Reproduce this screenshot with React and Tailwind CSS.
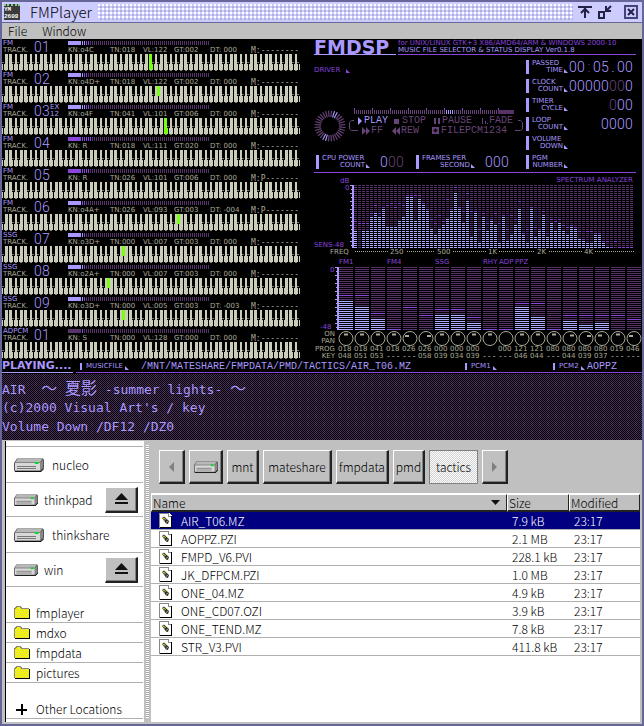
import React from "react";

const UI = "font-['Noto_Sans_CJK_JP',sans-serif] font-light";
const MONO = "font-['Liberation_Mono',monospace]";
const DASH = "font-['DejaVu_Sans_Mono',monospace] text-[8px] leading-[7px]";
const TINY = "font-['DejaVu_Sans',sans-serif] text-[7px] leading-[7px]";
const TERM = "font-['DejaVu_Sans_Mono','Noto_Sans_CJK_JP',monospace]";

const range = (n) => Array.from({ length: n }, (_, i) => i);

const TRACKS = [
  { kind: "FM", n: "01", on: "#aa99ff", bars: 2, mids: 2, kn: "o4C", tn: "018", vl: "122", gt: "002", dt: " 000", m: "--------", key: [147, false] },
  { kind: "FM", n: "02", on: "#aa99ff", bars: 1, mids: 2, kn: "o4D+", tn: "018", vl: "122", gt: "002", dt: " 000", m: "--------", key: [155, true] },
  { kind: "FM", n: "03", ex: true, on: "#aa99ff", bars: 2, mids: 2, kn: "o4F", tn: "041", vl: "101", gt: "006", dt: " 000", m: "--------", key: [162, false] },
  { kind: "FM", n: "04", on: "#8844dd", bars: 0, mids: 5, kn: " R", tn: "018", vl: "111", gt: "020", dt: " 000", m: "--------" },
  { kind: "FM", n: "05", on: "#8844dd", bars: 0, mids: 4, kn: " R", tn: "026", vl: "101", gt: "006", dt: " 000", m: "P-------" },
  { kind: "FM", n: "06", on: "#aa99ff", bars: 0, mids: 2, kn: "o4A+", tn: "026", vl: "093", gt: "003", dt: "-004", m: "P-------", key: [175, true] },
  { kind: "SSG", n: "07", on: "#aa99ff", bars: 1, mids: 1, kn: "o3D+", tn: "000", vl: "007", gt: "003", dt: " 000", m: "--------", key: [120, true] },
  { kind: "SSG", n: "08", on: "#aa99ff", bars: 1, mids: 1, kn: "o2A+", tn: "000", vl: "007", gt: "003", dt: " 000", m: "--------", key: [105, true] },
  { kind: "SSG", n: "09", on: "#aa99ff", bars: 1, mids: 1, kn: "o3D+", tn: "000", vl: "005", gt: "003", dt: "-003", m: "--------", key: [120, true] },
  { kind: "ADPCM", n: "01", on: "#553366", bars: 0, mids: 1, kn: " S", tn: "000", vl: "128", gt: "000", dt: " 000", m: "--------" },
];

const SPECTRUM = [
  [9, 14], [0, 13], [9, 13], [9, 13], [16, 18], [18, 22], [16, 18], [20, 21], [11, 22], [11, 23],
  [11, 21], [14, 23], [16, 22], [26, 27], [26, 27], [14, 27], [25, 27], [22, 23], [19, 20], [10, 15],
  [7, 13], [10, 17], [12, 14], [15, 25], [19, 20], [28, 31], [20, 21], [13, 19], [24, 28], [6, 19],
  [18, 19], [3, 10], [16, 18], [9, 13], [14, 15], [12, 18], [3, 13], [16, 17], [4, 10], [7, 17],
  [12, 15], [20, 24], [7, 8], [3, 10], [20, 21], [6, 11], [9, 10], [17, 19], [6, 8], [13, 15],
  [9, 14], [13, 15], [9, 12], [7, 11], [11, 12], [10, 11], [5, 9], [4, 5], [3, 9], [3, 9],
  [7, 8], [7, 8], [3, 4], [1, 4], [0, 1], [0, 4], [0, 1], [0, 1], [0, 1], [0, 1],
];

const LEVELS = [
  [15, 18], [12, 18], [6, 9], [0, 1], [0, 12], [0, 8], [8, 11], [8, 11], [4, 7], [0, 1],
  [0, 1], [12, 14], [7, 14], [0, 1], [5, 8], [3, 8], [4, 8], [0, 8], [0, 6],
];
const PAN = [0, 0, 0, 0, -3, 3, 0, 0, 0, 0, null, 0, 0, 0, 2, 3, -2, 0, -3];

const PROG = ["018", "018", "041", "018", "026", "026", "000", "000", "000", "", "000", "121", "121", "080", "080", "080", "080", "019", "046"];
const KEYS = ["048", "051", "053", "---", "---", "058", "039", "034", "039", "---", "---", "046", "044", "---", "044", "039", "037", "---", "---"];

const FILES = [
  ["AIR_T06.MZ", "7.9 kB"], ["AOPPZ.PZI", "2.1 MB"], ["FMPD_V6.PVI", "228.1 kB"], ["JK_DFPCM.PZI", "1.0 MB"],
  ["ONE_04.MZ", "4.9 kB"], ["ONE_CD07.OZI", "3.9 kB"], ["ONE_TEND.MZ", "7.8 kB"], ["STR_V3.PVI", "411.8 kB"],
];

function Digits({ value, dim = [], className = "" }) {
  return (
    <span className={"flex h-[14px] font-['Roboto',sans-serif] text-[14px] leading-[14px] font-light text-[#aa99ff] " + className}>
      {value.split("").map((c, i) => (
        <span key={i} className={"w-2 text-center " + (dim.includes(i) ? "text-[#664477]" : "")}>{c}</span>
      ))}
    </span>
  );
}

function Corner({ className = "" }) {
  return (
    <svg width="4" height="4" viewBox="0 0 4 4" className={"inline-block " + className} aria-hidden="true">
      <path d="M0 0L4 4H0z" fill="currentColor" />
    </svg>
  );
}

/* ---------- title bar and menus ---------- */

function ChipIcon() {
  return (
    <div className={"ml-0.5 h-4 w-4 border-t-2 border-dotted border-[#88cc88] bg-[#3a3a3a] text-[6px] leading-[7px] font-bold text-white " + MONO}>
      <div>YM</div>
      <div>2608</div>
    </div>
  );
}

function TitleBar() {
  return (
    <header className="flex h-5 items-center bg-[#ccccff]">
      <ChipIcon />
      <h1 className={"ml-[10px] w-[66px] text-[15px] leading-5 text-black " + UI}>FMPlayer</h1>
      <div className="ml-0.5 h-4 flex-1 bg-[radial-gradient(circle_at_1px_1px,#ffffff_1px,transparent_1px),radial-gradient(circle_at_3px_3px,#b0b0dd_1px,transparent_1px)] bg-[length:4px_4px]" />
      <button aria-label="Roll up" className="ml-1 flex h-4 w-4 items-center justify-center">
        <svg width="14" height="12" viewBox="0 0 14 12" fill="none" stroke="#222244" strokeWidth="2" shapeRendering="crispEdges">
          <path d="M0 1H14M7 2V12" /><path d="M3 7L7 3L11 7" shapeRendering="auto" />
        </svg>
      </button>
      <button aria-label="Minimize" className="ml-1 flex h-4 w-4 items-center justify-center">
        <svg width="14" height="14" viewBox="0 0 14 14" fill="none" stroke="#222244">
          <path d="M1 7H6V13H1z" strokeWidth="2" /><path d="M13 1L9 5M8 1V6H13" strokeWidth="2" />
        </svg>
      </button>
      <button aria-label="Close" className="mr-1 ml-[11px] flex h-[14px] w-[14px] items-center justify-center border-2 border-[#444477]">
        <svg width="10" height="10" viewBox="0 0 10 10" stroke="#222244" strokeWidth="2">
          <path d="M2 2L8 8M8 2L2 8" />
        </svg>
      </button>
    </header>
  );
}

function MenuBar() {
  return (
    <nav className={"flex h-[17px] gap-[15px] border-t border-t-[#666699] bg-[#c0c0c0] pl-1.5 text-[12px] leading-4 text-black " + UI}>
      <button>File</button>
      <button>Window</button>
    </nav>
  );
}

/* ---------- track list ---------- */

function Keyboard({ lit }) {
  const blacks = [3, 8, 18, 23, 28];
  const octaves = range(10).map((o) => o * 35 - 28);
  return (
    <svg width="298" height="18" viewBox="0 0 298 18" shapeRendering="crispEdges" className="block" aria-hidden="true">
      {octaves.map((x) => range(7).map((k) => (
        <g key={x + "-" + k}>
          <rect x={x + k * 5} y="0" width="4" height="16" fill="#ccccbb" />
          <rect x={x + k * 5 + 1} y="16" width="2" height="1" fill="#888877" />
        </g>
      )))}
      {lit && !lit[1] && <rect x={lit[0]} y="0" width="4" height="16" fill="#77ff11" />}
      {octaves.map((x) => blacks.map((b) => (
        <g key={x + "-" + b}>
          <rect x={x + b} y="0" width="3" height="10" fill="#000000" />
          <rect x={x + b} y="8" width="2" height="1" fill="#777766" />
        </g>
      )))}
      {lit && lit[1] && <rect x={lit[0]} y="0" width="3" height="10" fill="#77ff11" />}
    </svg>
  );
}

function Meter({ t }) {
  return (
    <svg width="142" height="5" viewBox="0 0 142 5" shapeRendering="crispEdges" className="mt-px block" aria-hidden="true">
      <rect x="0" y="0" width="13" height="4" fill={t.on} />
      {range(64).map((i) => (
        <rect key={i} x={14 + i * 2} y="0" width="1" height="4"
          fill={i < t.bars ? "#aa99ff" : i < t.bars + t.mids ? "#8844dd" : "#553366"} />
      ))}
    </svg>
  );
}

function Track({ t }) {
  return (
    <li className="h-8">
      <div className={"flex h-[14px] text-[#aaaa99] whitespace-pre " + TINY}>
        <div className="w-8 pl-px">
          <div className="text-[#aa99ff]">{t.kind}</div>
          <div>TRACK.</div>
        </div>
        <Digits value={t.n} />
        <div className="w-[18px] text-[#aa99ff]">
          {t.ex && <><div>EX</div><div>12</div></>}
        </div>
        <div>
          <Meter t={t} />
          <div className="flex pt-px">
            <span className="w-[42px]">KN:{t.kn}</span>
            <span className="w-[33px]">TN:{t.tn}</span>
            <span className="w-[31px]">VL:{t.vl}</span>
            <span className="w-9">GT:{t.gt}</span>
            <span className="w-[41px]">DT: {t.dt.trim()}</span>
            <span className={DASH}>M:{t.m}</span>
          </div>
        </div>
      </div>
      <Keyboard lit={t.key} />
    </li>
  );
}

/* ---------- status side ---------- */

function Stat({ a, b, children }) {
  return (
    <div className="flex h-[14px] text-[#aa99ff]">
      <div className="mr-[3px] w-[3px] bg-[#aa99ff]" />
      <div className={"flex-1 whitespace-nowrap " + TINY}>
        <div>{a}</div>
        <div className="flex items-center justify-end gap-px">{b}<Corner /></div>
      </div>
      {children}
    </div>
  );
}

function Dial() {
  return (
    <svg width="32" height="32" viewBox="-16 -16 32 32" aria-hidden="true">
      {range(32).map((i) => {
        const a = ((i + 0.5) * Math.PI) / 16;
        const lit = i === 25 || i === 26 || i === 9 || i === 10;
        return (
          <line key={i} x1={Math.cos(a) * 9} y1={Math.sin(a) * 9} x2={Math.cos(a) * 15.5} y2={Math.sin(a) * 15.5}
            stroke={lit ? "#aa99ff" : "#664477"} strokeWidth="1.2" />
        );
      })}
    </svg>
  );
}

function Progress() {
  return (
    <svg width="161" height="8" viewBox="0 0 161 8" shapeRendering="crispEdges" className="block" aria-hidden="true">
      {range(72).map((i) => (
        <rect key={i} x={i * 2} y="2" width="1" height="4" fill={i >= 46 && i < 50 ? "#aa99ff" : "#664477"} />
      ))}
      {range(9).map((i) => <rect key={i} x={i * 18} y="0" width="1" height="2" fill="#8844dd" />)}
      <rect x="144" y="2" width="16" height="4" fill="#553366" />
    </svg>
  );
}

function Transport() {
  return (
    <div className="flex h-[35px] items-start">
      <div className="pt-0.5"><Dial /></div>
      <div className="ml-[3px] w-[174px]">
        <div className="ml-[5px]"><Progress /></div>
        <div className={"flex text-[10px] leading-[10px] text-[#664477] " + MONO}>
          <svg width="9" height="20" viewBox="0 0 9 20" fill="none" stroke="#664477" aria-hidden="true">
            <path d="M5 4.5H2.5L0.5 6.5V13L2.5 14.5H9" />
          </svg>
          <div className="flex-1">
            <div className="flex h-[10px] items-center">
              <svg width="4" height="8" viewBox="0 0 4 8"><path d="M0 0L4 4L0 8z" fill="#aa99ff" /></svg>
              <span className="w-8 pl-0.5 text-[#aa99ff]">PLAY</span>
              <span className="mr-[3px] h-[5px] w-[5px] bg-[#664477]" />
              <span className="w-8">STOP</span>
              <svg width="8" height="8" viewBox="0 0 8 8"><path d="M1 1V7M5 1V7" stroke="#664477" strokeWidth="2" /></svg>
              <span className="w-[38px]">PAUSE</span>
              <svg width="9" height="8" viewBox="0 0 9 8" shapeRendering="crispEdges"><path d="M2.5 1V7M5.5 4V7M7.5 6V7" stroke="#664477" /></svg>
              <span className="w-6">FADE</span>
            </div>
            <div className="flex h-[10px] items-center pl-1">
              <svg width="9" height="8" viewBox="0 0 9 8"><path d="M0 0L4 4L0 8zM4 0L8 4L4 8z" fill="#664477" /></svg>
              <span className="w-[21px]">FF</span>
              <svg width="9" height="8" viewBox="0 0 9 8"><path d="M4 0L0 4L4 8zM8 0L4 4L8 8z" fill="#664477" /></svg>
              <span className="w-[31px]">REW</span>
              <svg width="9" height="8" viewBox="0 0 9 8"><path d="M0 0H7V7H0z" fill="#664477" /><path d="M1.5 3.5H5.5M3.5 1.5V5.5" stroke="#000" strokeWidth="1.4" /></svg>
              <span>FILEPCM1234</span>
            </div>
          </div>
          <svg width="8" height="20" viewBox="0 0 8 20" fill="none" stroke="#664477" aria-hidden="true">
            <path d="M3 4.5H5.5L7.5 6.5V13L5.5 14.5H0" />
          </svg>
        </div>
      </div>
    </div>
  );
}

function Axis({ x, y }) {
  return (
    <g fill="#aa99ff">
      <rect x={x + 1} y={y} width="2" height="63" />
      {range(16).map((i) => <rect key={i} x={i % 2 ? x : x - 1} y={y + i * 4} width="2" height="1" />)}
    </g>
  );
}

function Columns({ data, x, y, pitch, width }) {
  return data.map(([lit, peak], c) => (
    <g key={c}>
      {range(32).map((r) => {
        const level = 32 - r;
        const fill = level <= lit ? "#aaaaff" : level === peak ? "#8844dd" : "#553366";
        return <rect key={r} x={x + c * pitch} y={y + r * 2} width={width} height="1" fill={fill} />;
      })}
    </g>
  ));
}

const CHART_TEXT = "block " + TINY;

function Spectrum() {
  return (
    <svg viewBox="0 0 328 84" width="328" height="84" shapeRendering="crispEdges" className={CHART_TEXT} role="img" aria-label="Spectrum analyzer">
      <text x="26" y="10" fill="#8844dd">dB</text>
      <text x="319" y="9" textAnchor="end" fill="#8844dd">SPECTRUM ANALYZER</text>
      <text x="31" y="17" fill="#8844dd">0</text>
      <text x="0" y="74" fill="#8844dd">SENS-48</text>
      <Axis x={37} y={12} />
      <Columns data={SPECTRUM} x={40} y={12} pitch={4} width={3} />
      <path d="M41 78.5H320" stroke="#aaaa99" strokeDasharray="1 1" />
      {[[16, "FREQ", 24], [76, "250", 18], [123, "500", 18], [174, "1K", 13], [223, "2K", 13], [270, "4K", 13]].map(([x, label, w]) => (
        <g key={label}>
          <rect x={x - 2} y="75" width={w} height="8" fill="#000" />
          <text x={x} y="81" fill="#aaaa99">{label}</text>
        </g>
      ))}
    </svg>
  );
}

function Levels() {
  return (
    <svg viewBox="0 0 328 89" width="328" height="89" shapeRendering="crispEdges" className={CHART_TEXT} role="img" aria-label="Channel levels">
      {[[25, "FM1"], [73, "FM4"], [121, "SSG"], [169, "RHY"], [185, "ADP"], [201, "PPZ"]].map(([x, label]) => (
        <text key={label} x={x} y="7" fill="#8844dd">{label}</text>
      ))}
      <text x="16" y="15" fill="#8844dd">0</text>
      <text x="6" y="72" fill="#8844dd">-48</text>
      <Axis x={22} y={10} />
      <Columns data={LEVELS} x={25} y={10} pitch={16} width={14} />
      <text x="21" y="79" textAnchor="end" fill="#aaaa99">ON</text>
      <text x="21" y="86" textAnchor="end" fill="#aaaa99">PAN</text>
      {PAN.map((p, i) => (
        <g key={i} shapeRendering="auto" transform={`translate(${32 + i * 16} 81.5)`}>
          <circle r="7" fill="none" stroke="#aaaa99" strokeWidth="1" />
          {p !== null && <rect x={p - 2} y={-5 + Math.abs(p) / 2} width="4" height="2" fill="#aaaa99" />}
        </g>
      ))}
    </svg>
  );
}

function ProgTable() {
  const row = (name, cells) => (
    <tr>
      <th scope="row" className="w-6 p-0 pr-[3px] text-right font-normal">{name}</th>
      {cells.map((c, i) => <td key={i} className={"w-4 p-0 " + (c === "---" ? DASH : "")}>{c}</td>)}
    </tr>
  );
  return (
    <table className={"w-[328px] table-fixed border-collapse text-[#aaaa99] " + TINY}>
      <tbody>{row("PROG", PROG)}{row("KEY", KEYS)}</tbody>
    </table>
  );
}

function Status() {
  return (
    <section className="min-w-0 flex-1 pl-3">
      <div className="mr-1.5 flex h-[15px] gap-0.5">
        <div className="w-[82px] border-b border-[#aa99ff] font-['DejaVu_Sans',sans-serif] text-[19px] leading-[15px] font-bold text-[#aa99ff]">FMDSP</div>
        <div className={"flex-1 border-b border-[#8844dd] whitespace-nowrap " + TINY}>
          <div className="text-[#8844dd]">for UNIX/LINUX GTK+3 X86/AMD64/ARM &amp; WINDOWS 2000-10</div>
          <div className="text-[#aa99ff]">MUSIC FILE SELECTOR &amp; STATUS DISPLAY Ver0.1.8</div>
        </div>
      </div>
      <div className="mr-1.5 flex h-[118px] border-b border-[#8844dd]">
        <div className="flex w-[212px] flex-col">
          <div className={"flex h-[53px] gap-1.5 pt-3 text-[#8844dd] " + TINY}>
            DRIVER <Corner className="mt-0.5" />
          </div>
          <Transport />
          <div className="mt-3 flex pl-0.5">
            <div className="w-[100px] pr-3"><Stat a="CPU POWER" b="COUNT"><Digits value="000" dim={[1, 2]} className="pl-2.5" /></Stat></div>
            <div className="w-[93px]"><Stat a="FRAMES PER" b="SECOND"><Digits value="000" className="pl-2.5" /></Stat></div>
          </div>
        </div>
        <div className="flex flex-1 flex-col gap-[5px] pt-[5px]">
          {[["PASSED", "TIME", "00:05.00", [2]], ["CLOCK", "COUNT", "00000000", [5, 6]], ["TIMER", "CYCLE", "000", [0]], ["LOOP", "COUNT", "0000", []], ["VOLUME", "DOWN", "", []], ["PGM", "NUMBER", "", []]].map(([a, b, v, dim]) => (
            <div key={a} className="flex h-[14px]">
              <div className="w-[42px]"><Stat a={a} b={b} /></div>
              <Digits value={v} dim={dim} className="flex-1 justify-end pr-[3px]" />
            </div>
          ))}
        </div>
      </div>
      <Spectrum />
      <Levels />
      <ProgTable />
    </section>
  );
}

function SongBar() {
  const tab = "mr-1 h-[7px] w-0.5 bg-[#aa99ff]";
  const small = "flex items-end gap-0.5 " + TINY;
  return (
    <div className="flex h-[14px] gap-[3px] pb-px text-[#aa99ff]">
      <div className="w-[71px] border-b border-[#aa99ff] font-['DejaVu_Sans',sans-serif] text-[11px] leading-[12px] font-bold">PLAYING....</div>
      <div className={"flex min-w-0 flex-1 items-center border-b border-[#8844dd] pl-1 text-[10px] leading-[11px] whitespace-nowrap " + MONO}>
        <span className={tab} />
        <span className={small + " w-[55px]"}>MUSICFILE<Corner /></span>
        <span className="w-[324px]">/MNT/MATESHARE/FMPDATA/PMD/TACTICS/AIR_T06.MZ</span>
        <span className={tab} />
        <span className={small + " w-[82px]"}>PCM1<Corner /></span>
        <span className={tab} />
        <span className={small + " w-[28px]"}>PCM2<Corner /></span>
        <span>AOPPZ</span>
      </div>
    </div>
  );
}

function Comment() {
  return (
    <div className={"h-[66px] bg-[repeating-conic-gradient(#4c2f5c_0_25%,#000000_0_50%)] bg-[length:2px_2px] pt-[5px] text-[13px] leading-[19px] text-[#aa99ff] whitespace-pre " + TERM}>
      <div className="h-[19px]">{"AIR  "}<span className="text-[16px]">～</span>{" "}<span className="text-[16px]">夏影</span>{" -summer lights- "}<span className="text-[16px]">～</span></div>
      <div className="h-[19px]">(c)2000 Visual Art's / key</div>
      <div className="h-[19px]">Volume Down /DF12 /DZ0</div>
    </div>
  );
}

/* ---------- file chooser ---------- */

function Drive({ small }) {
  return (
    <svg width={small ? 24 : 30} height={small ? 12 : 14} viewBox="0 0 30 14" preserveAspectRatio="none" aria-hidden="true">
      <path d="M3 0.5H29L30 2V10L27 14H1L0 12V5z" fill="#555555" />
      <path d="M3.5 1H28L26 4.5H1z" fill="#b8b8b8" />
      <path d="M1 5H26V12.5H1z" fill="#d8d8d8" />
      <path d="M26 5L29 1.5V9.5L26 13z" fill="#888888" />
      <path d="M3 8.5H22M3 10.5H22" stroke="#777777" />
      <path d="M1 13.5H27L30 10.5" stroke="#111111" fill="none" />
      <path d="M21 4H24.5V6H21z" fill="#00dd22" />
    </svg>
  );
}

function Folder() {
  return (
    <svg width="16" height="13" viewBox="0 0 16 13" shapeRendering="crispEdges" aria-hidden="true">
      <path d="M1 2L2 0H6L7 2H15V12H1z" fill="#f4f400" />
      {range(5).map((r) => range(6).map((c) => (
        <rect key={r + "-" + c} x={2 + c * 2 + (r % 2)} y={3 + r * 2} width="1" height="1" fill="#d8d870" />
      )))}
      <path d="M0.5 12V2.5H1.5V1.5H2.5V0.5H6.5V1.5H7.5V2.5H15" fill="none" stroke="#888888" />
      <path d="M15.5 3V12.5H1" fill="none" stroke="#000000" />
    </svg>
  );
}

function FileIcon() {
  return (
    <svg width="13" height="15" viewBox="0 0 13 15" shapeRendering="crispEdges" className="block" aria-hidden="true">
      <path d="M0 0H10L13 3V15H0z" fill="#ffffff" />
      <path d="M0.5 15V0.5H9.5V3.5H12" fill="none" stroke="#888888" />
      <path d="M12.5 3V14.5H1" fill="none" stroke="#000000" />
      <g shapeRendering="auto">
        <path d="M3 5L5 3.5L10 8L9 11L7 10.5z" fill="#333322" />
        <path d="M3.5 5.5L5 4.5L6 5.5L5 6.5z" fill="#d8d800" />
        <path d="M5 7.5L7 6M7 9.5L9 8" stroke="#bbbbbb" strokeWidth="0.8" />
      </g>
    </svg>
  );
}

const BEVEL = "border-t border-l border-r-2 border-b-2 border-t-white border-l-white border-r-[#222222] border-b-[#222222] bg-[#c0c0c0] shadow-[inset_-1px_-1px_0_#808080]";

function Place({ name, removable }) {
  return (
    <li className={"flex items-center border-b border-[#b0b0b0] " + (removable ? "h-[34px]" : "h-9")}>
      <button className={"flex flex-1 items-center pl-2 " + (removable ? "gap-1.5" : "gap-2")}>
        <Drive small={removable} />
        <span>{name}</span>
      </button>
      {removable && (
        <button aria-label={"Eject " + name} className={"mr-[5px] flex h-[26px] w-[33px] items-center justify-center " + BEVEL}>
          <svg width="13" height="12" viewBox="0 0 13 12"><path d="M6.5 0L13 7H0zM0 9H13V11H0z" fill="#111111" /></svg>
        </button>
      )}
    </li>
  );
}

function Sidebar() {
  return (
    <aside className="w-[138px] border-l border-l-black bg-white">
      <ul className="mt-[5px] h-[273px] border-t border-b border-[#b0b0b0]">
        <Place name="nucleo" />
        <Place name="thinkpad" removable />
        <Place name="thinkshare" />
        <Place name="win" removable />
        {["fmplayer", "mdxo", "fmpdata", "pictures"].map((n, i) => (
          <li key={n} className={i === 0 ? "pt-4" : ""}>
            <button className="flex h-5 w-full items-center gap-1.5 border-b border-[#b0b0b0] pl-2"><Folder /><span>{n}</span></button>
          </li>
        ))}
        <li className="pt-4">
          <button className="flex h-5 w-full items-center gap-[9px] pl-2.5">
            <svg width="11" height="11" viewBox="0 0 11 11" shapeRendering="crispEdges"><path d="M5 0H7V11H5zM0 5H11V7H0z" fill="#000" /></svg>
            <span>Other Locations</span>
          </button>
        </li>
      </ul>
    </aside>
  );
}

function PathBar() {
  const base = "flex h-[34px] items-center justify-center ";
  return (
    <nav className="flex h-[52px] gap-1 pt-[9px] pl-2">
      <button aria-label="Scroll left" className={base + "w-[26px] " + BEVEL}>
        <svg width="5" height="10" viewBox="0 0 5 10"><path d="M5 0L0 5L5 10z" fill="#808080" /></svg>
      </button>
      <button aria-label="Root" className={base + "w-[34px] " + BEVEL}><Drive small /></button>
      <button className={base + "w-8 " + BEVEL}>mnt</button>
      <button className={base + "w-[69px] " + BEVEL}>mateshare</button>
      <button className={base + "w-[53px] " + BEVEL}>fmpdata</button>
      <button className={base + "w-8 " + BEVEL}>pmd</button>
      <button aria-pressed="true" className={base + "w-[49px] border border-[#808080] bg-[repeating-conic-gradient(#ffffff_0_25%,#d0d0d0_0_50%)] bg-[length:2px_2px]"}>tactics</button>
      <button aria-label="Scroll right" className={base + "w-[26px] " + BEVEL}>
        <svg width="5" height="10" viewBox="0 0 5 10"><path d="M0 0L5 5L0 10z" fill="#808080" /></svg>
      </button>
    </nav>
  );
}

function FileTable() {
  const th = "border-t border-l border-r border-b-2 border-t-white border-l-white border-r-[#222222] border-b-[#222222] bg-[#c0c0c0] p-0 pl-px text-left font-light";
  return (
    <div className="flex-1 border-t border-white bg-white">
      <table className="w-full table-fixed border-separate border-spacing-0">
        <thead>
          <tr className="h-[18px] leading-[15px]">
            <th className={th}><span className="flex items-center justify-between pr-1.5">Name<svg width="9" height="5" viewBox="0 0 9 5"><path d="M0 0H9L4.5 5z" fill="#111" /></svg></span></th>
            <th className={th + " w-[62px]"}>Size</th>
            <th className={th + " w-[71px]"}>Modified</th>
          </tr>
        </thead>
        <tbody>
          {FILES.map(([name, size], i) => (
            <tr key={name} className={"h-[18px] leading-[17px] " + (i === 0 ? "bg-[#000080] text-white" : "text-black")}>
              <td className="border-b border-[#b0b0b0] p-0 pl-2"><span className="flex items-center gap-[9px]"><FileIcon />{name}</span></td>
              <td className="border-b border-[#b0b0b0] p-0 pl-[5px] whitespace-nowrap">{size}</td>
              <td className="border-b border-[#b0b0b0] p-0 pl-[5px]">23:17</td>
            </tr>
          ))}
        </tbody>
      </table>
    </div>
  );
}

function FileChooser() {
  return (
    <section className={"flex h-[284px] bg-[#c0c0c0] pt-px pb-0.5 pl-[3px] text-[12px] text-black " + UI}>
      <Sidebar />
      <div className="flex w-2 justify-center border-l border-white pt-1 pb-1">
        <div className="w-[3px] bg-[repeating-linear-gradient(#ffffff_0_1px,#a8a8a8_1px_2px)]" />
      </div>
      <div className="mr-0.5 flex min-w-0 flex-1 flex-col">
        <PathBar />
        <FileTable />
      </div>
    </section>
  );
}

export default function App() {
  return (
    <div className="border-2 border-[#666699] bg-black">
      <TitleBar />
      <MenuBar />
      <main>
        <div className="mt-px flex">
          <ul className="w-[300px] overflow-hidden">
            {TRACKS.map((t, i) => <Track key={i} t={t} />)}
          </ul>
          <Status />
        </div>
        <SongBar />
        <Comment />
        <FileChooser />
      </main>
    </div>
  );
}
